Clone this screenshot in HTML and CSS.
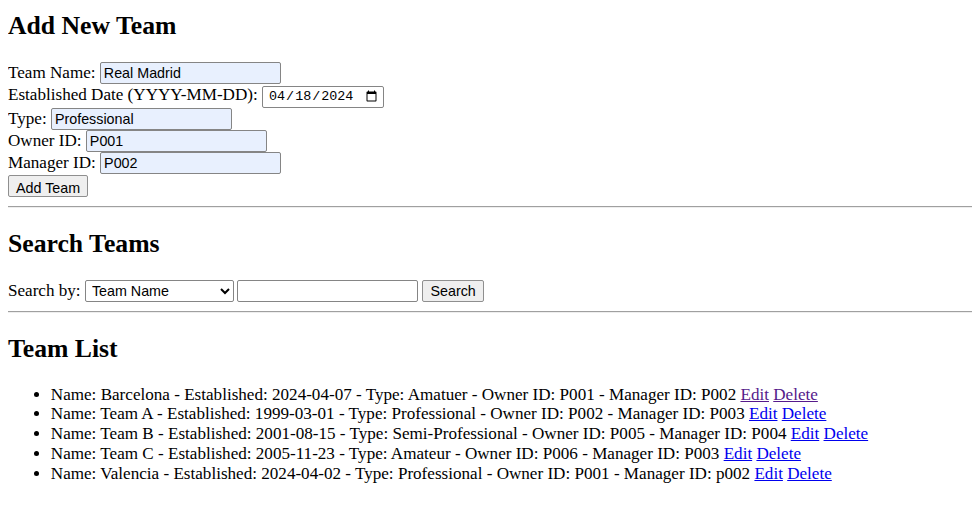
FILE: index.html
```html
<!DOCTYPE html>
<html>
<head>
<meta charset="utf-8">
<title>Teams</title>
<link rel="stylesheet" href="styles.css">
</head>
<body>
<h2 class="first">Add New Team</h2>
<form class="team-form">
  <label>Team Name: <input class="field auto" type="text" value="Real Madrid"></label><br>
  <label>Established Date (YYYY-MM-DD): <input class="date" type="date" value="2024-04-18"></label><br>
  <label>Type: <input class="field auto" type="text" value="Professional"></label><br>
  <label>Owner ID: <input class="field auto" type="text" value="P001"></label><br>
  <label>Manager ID: <input class="field auto" type="text" value="P002"></label><br>
  <button class="btn" type="button">Add Team</button>
</form>
<hr>
<h2>Search Teams</h2>
<div class="search">
  <label>Search by: <select class="select"><option>Team Name</option></select></label>
  <input class="field" type="text">
  <button class="btn" type="button">Search</button>
</div>
<hr>
<h2>Team List</h2>
<ul class="list">
  <li>Name: Barcelona - Established: 2024-04-07 - Type: Amatuer - Owner ID: P001 - Manager ID: P002 <a class="visited" href="#">Edit</a> <a class="visited" href="#">Delete</a></li>
  <li>Name: Team A - Established: 1999-03-01 - Type: Professional - Owner ID: P002 - Manager ID: P003 <a href="#">Edit</a> <a href="#">Delete</a></li>
  <li>Name: Team B - Established: 2001-08-15 - Type: Semi-Professional - Owner ID: P005 - Manager ID: P004 <a href="#">Edit</a> <a href="#">Delete</a></li>
  <li>Name: Team C - Established: 2005-11-23 - Type: Amateur - Owner ID: P006 - Manager ID: P003 <a href="#">Edit</a> <a href="#">Delete</a></li>
  <li>Name: Valencia - Established: 2024-04-02 - Type: Professional - Owner ID: P001 - Manager ID: p002 <a href="#">Edit</a> <a href="#">Delete</a></li>
</ul>
</body>
</html>
```
FILE: styles.css
```css
body {
  margin: 0 0 0 8px;
  font-family: "Liberation Serif", serif;
  font-size: 17.1px;
  color: #000;
  background: #fff;
}
h2 {
  font-size: 25.7px;
  font-weight: bold;
  margin: 21px 0;
}
h2.first {
  margin-top: 11px;
}
hr {
  margin: 8.5px 0;
  border: 0;
  border-top: 1px solid #a0a0a0;
  border-bottom: 1px solid #eeeeee;
}
.field, .date, .select, .btn {
  font-family: "Liberation Sans", Arial, sans-serif;
  font-size: 14.3px;
  box-sizing: border-box;
  height: 22px;
  margin: 0;
  vertical-align: baseline;
}
.field {
  width: 181px;
  padding: 1px 3px;
  border: 1px solid #858585;
  border-radius: 2px;
  background: #fff;
  color: #000;
}
.field.auto {
  background-color: #e8f0fe;
}
.date {
  width: 122px;
  padding: 1px 3px 1px 5px;
  border: 1px solid #858585;
  border-radius: 2px;
  font-family: "Liberation Mono", monospace;
  font-size: 13.4px;
  background: #fff;
}
.select {
  width: 149px;
  padding: 0 2px;
  border: 1px solid #858585;
  border-radius: 2px;
  background: #fff;
  color: #000;
}
.btn {
  padding: 1px 7px;
  border: 1px solid #8f8f8f;
  border-radius: 2px;
  background: #efefef;
  color: #000;
}
.team-form label, .team-form .btn {
  line-height: 22.3px;
}
.search {
  line-height: 22px;
}
.search label {
  margin-right: -1px;
}
.list {
  margin: 15px 0;
  padding-left: 42.8px;
}
.list li {
  line-height: 19.7px;
}
a {
  color: #0000ee;
}
a.visited {
  color: #551a8b;
}
```
